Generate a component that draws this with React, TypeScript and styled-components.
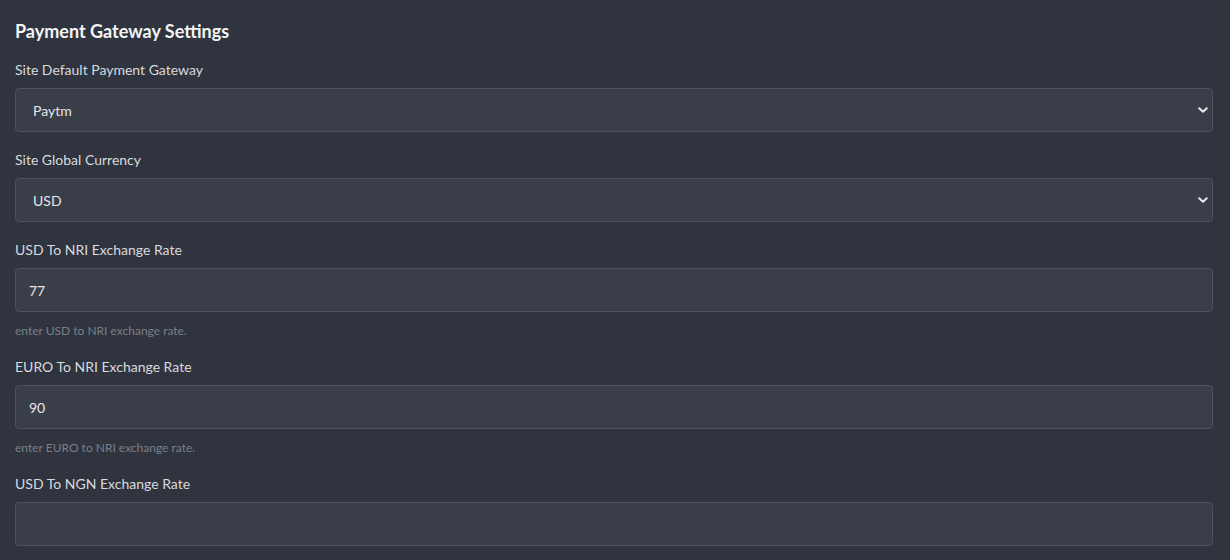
import React from "react";
import styled, { createGlobalStyle } from "styled-components";

const Global = createGlobalStyle`
  html, body { margin: 0; padding: 0; background: #2f343e; }
  body { font-family: Lato, "Open Sans", sans-serif; }
  * { box-sizing: border-box; }
`;

const Page = styled.div`
  padding: 20px 17px 0 15px;
  display: flex;
  flex-direction: column;
`;

const Title = styled.h2`
  margin: 0 0 18px;
  font-size: 18px;
  line-height: 22px;
  font-weight: 700;
  color: #f3f4f6;
`;

const Field = styled.div<{ $gap: number }>`
  display: flex;
  flex-direction: column;
  margin-bottom: ${(p) => p.$gap}px;
`;

const Label = styled.label`
  font-size: 14px;
  line-height: 20px;
  color: #d8dade;
  margin-bottom: 8px;
`;

const SelectWrap = styled.div`
  position: relative;
  height: 44px;
  background: #3a3e49;
  border: 1px solid #4d525c;
  border-radius: 4px;
  display: flex;
  align-items: center;
  padding: 0 17px;
  font-size: 14px;
  color: #e4e6ea;
`;

const Chevron = styled.svg`
  position: absolute;
  right: 3px;
  top: 50%;
  transform: translateY(-50%);
`;

const Input = styled.div`
  height: 44px;
  background: #3a3e49;
  border: 1px solid #4d525c;
  border-radius: 4px;
  display: flex;
  align-items: center;
  padding: 0 13px;
  font-size: 14px;
  color: #e4e6ea;
`;

const Help = styled.div`
  margin-top: 11px;
  font-size: 12px;
  line-height: 16px;
  color: #7b808a;
`;

const Select = ({ value }: { value: string }) => (
  <SelectWrap>
    {value}
    <Chevron width="12" height="12" viewBox="0 0 12 12">
      <path d="M2.2 4.2 L6 7.8 L9.8 4.2" fill="none" stroke="#e8e9ec" strokeWidth="2" strokeLinecap="round" strokeLinejoin="round" />
    </Chevron>
  </SelectWrap>
);

export default function App() {
  return (
    <>
      <Global />
      <Page>
        <Title>Payment Gateway Settings</Title>
        <Field $gap={18}>
          <Label>Site Default Payment Gateway</Label>
          <Select value="Paytm" />
        </Field>
        <Field $gap={18}>
          <Label>Site Global Currency</Label>
          <Select value="USD" />
        </Field>
        <Field $gap={18}>
          <Label>USD To NRI Exchange Rate</Label>
          <Input>77</Input>
          <Help>enter USD to NRI exchange rate.</Help>
        </Field>
        <Field $gap={18}>
          <Label>EURO To NRI Exchange Rate</Label>
          <Input>90</Input>
          <Help>enter EURO to NRI exchange rate.</Help>
        </Field>
        <Field $gap={18}>
          <Label>USD To NGN Exchange Rate</Label>
          <Input />
        </Field>
      </Page>
    </>
  );
}
